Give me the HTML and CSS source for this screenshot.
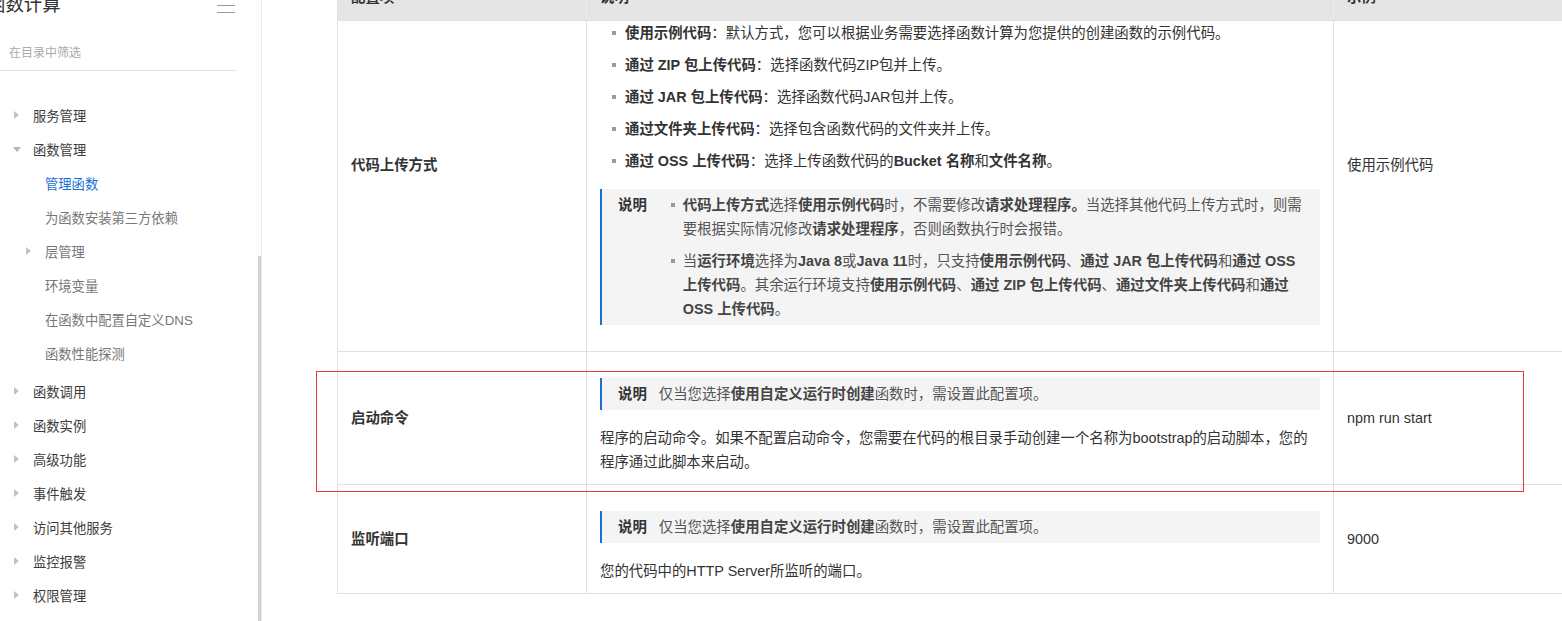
FILE: index.html
```html
<!DOCTYPE html>
<html lang="zh-CN">
<head>
  <meta charset="UTF-8">
  <meta name="viewport" content="width=device-width, initial-scale=1.0">
  <title>管理函数 - 函数计算</title>
  <link rel="stylesheet" href="styles.css">
</head>
<body>

  <aside class="sidebar">
    <div class="side-head">
      <span class="side-title">函数计算</span>
      <svg class="menu-icon" width="18" height="16" viewBox="0 0 18 16">
        <path d="M0 1.5h18M0 8.5h18M0 15.5h18" stroke="#9a9a9a" stroke-width="1"/>
      </svg>
    </div>
    <div class="filter">在目录中筛选</div>

    <ul class="nav">
      <li class="nav-item"><span class="arrow"></span>服务管理</li>
      <li class="nav-item"><span class="arrow open"></span>函数管理</li>
      <li>
        <ul class="sub-nav">
          <li class="nav-item sub active"><span class="arrow none"></span>管理函数</li>
          <li class="nav-item sub"><span class="arrow none"></span>为函数安装第三方依赖</li>
          <li class="nav-item sub"><span class="arrow"></span>层管理</li>
          <li class="nav-item sub"><span class="arrow none"></span>环境变量</li>
          <li class="nav-item sub"><span class="arrow none"></span>在函数中配置自定义DNS</li>
          <li class="nav-item sub"><span class="arrow none"></span>函数性能探测</li>
        </ul>
      </li>
      <li class="nav-item"><span class="arrow"></span>函数调用</li>
      <li class="nav-item"><span class="arrow"></span>函数实例</li>
      <li class="nav-item"><span class="arrow"></span>高级功能</li>
      <li class="nav-item"><span class="arrow"></span>事件触发</li>
      <li class="nav-item"><span class="arrow"></span>访问其他服务</li>
      <li class="nav-item"><span class="arrow"></span>监控报警</li>
      <li class="nav-item"><span class="arrow"></span>权限管理</li>
    </ul>
    <div class="scroll-thumb"></div>
  </aside>

  <main class="main">
    <div class="doc">
      <table class="config-table head-table">
        <colgroup><col class="c1"><col class="c2"><col class="c3"></colgroup>
        <tr>
          <th>配置项</th>
          <th>说明</th>
          <th>示例</th>
        </tr>
      </table>

      <table class="config-table">
        <colgroup><col class="c1"><col class="c2"><col class="c3"></colgroup>
        <tr>
          <td class="name">代码上传方式</td>
          <td>
            <p>选择函数代码的上传方式，包括：</p>
            <ul class="dots">
              <li><b>使用示例代码</b>：默认方式，您可以根据业务需要选择函数计算为您提供的创建函数的示例代码。</li>
              <li><b>通过 ZIP 包上传代码</b>：选择函数代码ZIP包并上传。</li>
              <li><b>通过 JAR 包上传代码</b>：选择函数代码JAR包并上传。</li>
              <li><b>通过文件夹上传代码</b>：选择包含函数代码的文件夹并上传。</li>
              <li><b>通过 OSS 上传代码</b>：选择上传函数代码的<b>Bucket 名称</b>和<b>文件名称</b>。</li>
            </ul>
            <div class="note">
              <span class="note-label">说明</span>
              <div class="note-body">
                <ul class="dots">
                  <li><b>代码上传方式</b>选择<b>使用示例代码</b>时，不需要修改<b>请求处理程序。</b>当选择其他代码上传方式时，则需要根据实际情况修改<b>请求处理程序</b>，否则函数执行时会报错。</li>
                  <li>当<b>运行环境</b>选择为<b>Java 8</b>或<b>Java 11</b>时，只支持<b>使用示例代码</b>、<b>通过 JAR 包上传代码</b>和<b>通过 OSS 上传代码</b>。其余运行环境支持<b>使用示例代码</b>、<b>通过 ZIP 包上传代码</b>、<b>通过文件夹上传代码</b>和<b>通过 OSS 上传代码</b>。</li>
                </ul>
              </div>
            </div>
          </td>
          <td class="example">使用示例代码</td>
        </tr>
        <tr>
          <td class="name">启动命令</td>
          <td>
            <div class="note">
              <span class="note-label">说明</span>
              <div class="note-body">仅当您选择<b>使用自定义运行时创建</b>函数时，需设置此配置项。</div>
            </div>
            <p>程序的启动命令。如果不配置启动命令，您需要在代码的根目录手动创建一个名称为bootstrap的启动脚本，您的程序通过此脚本来启动。</p>
          </td>
          <td class="example">npm run start</td>
        </tr>
        <tr>
          <td class="name">监听端口</td>
          <td>
            <div class="note">
              <span class="note-label">说明</span>
              <div class="note-body">仅当您选择<b>使用自定义运行时创建</b>函数时，需设置此配置项。</div>
            </div>
            <p>您的代码中的HTTP Server所监听的端口。</p>
          </td>
          <td class="example">9000</td>
        </tr>
      </table>
    </div>
  </main>

  <div class="highlight-box"></div>

</body>
</html>
```

FILE: styles.css
```css
body {
  margin: 0;
  display: flex;
  height: 100vh;
  overflow: hidden;
  background: #fff;
  color: #333;
  font-family: "Liberation Sans", "Noto Sans CJK SC", sans-serif;
}

ul {
  list-style: none;
  margin: 0;
  padding: 0;
}

/* sidebar */
.sidebar {
  position: relative;
  flex: 0 0 262px;
  box-sizing: border-box;
  height: 100%;
  padding-right: 26px;
  border-right: 1px solid #ececec;
}

.side-head {
  display: flex;
  justify-content: space-between;
  align-items: center;
  height: 24px;
  margin-top: -7px;
}

.side-title {
  margin-left: -13px;
  font-size: 18.4px;
  line-height: 24px;
  color: #333;
}

.filter {
  margin: 24px -2px 0 0;
  padding: 0 0 5px 9px;
  font-size: 12px;
  line-height: 24px;
  color: #aaa;
  border-bottom: 1px solid #e4e4e4;
}

.nav {
  margin-top: 27px;
}

.nav-item {
  display: flex;
  align-items: center;
  height: 34px;
  padding-left: 13px;
  font-size: 13.3px;
  color: #3c3c3c;
  white-space: nowrap;
}

.nav-item.sub {
  padding-left: 25px;
  color: #777;
}

.nav-item.active {
  color: #1a6fd8;
}

.sub-nav {
  padding-bottom: 4px;
}

.arrow {
  flex: 0 0 20px;
  height: 8px;
  position: relative;
}

.arrow::before {
  content: "";
  position: absolute;
  left: 1px;
  top: 0;
  border-left: 5px solid #c2c2c2;
  border-top: 4px solid transparent;
  border-bottom: 4px solid transparent;
}

.arrow.open::before {
  left: 0;
  top: 2px;
  border-top: 5px solid #b4b4b4;
  border-left: 4px solid transparent;
  border-right: 4px solid transparent;
  border-bottom: 0;
}

.arrow.none::before {
  display: none;
}

.scroll-thumb {
  position: absolute;
  right: 0;
  top: 256px;
  bottom: 0;
  width: 3px;
  background: #d2d2d2;
}

/* main document */
.main {
  flex: 1;
  min-width: 0;
  height: 100%;
  overflow: hidden;
  padding-left: 75px;
}

.doc {
  position: relative;
  display: flow-root;
}

.config-table {
  table-layout: fixed;
  width: 1256px;
  margin-top: -22px;
  border-collapse: collapse;
  font-size: 14.4px;
  line-height: 24px;
  color: #333;
}

.config-table col.c1 { width: 249px; }
.config-table col.c2 { width: 747px; }
.config-table col.c3 { width: 260px; }

.config-table td {
  padding: 10px 13px;
  border: 1px solid #e0e0e0;
  vertical-align: top;
  text-align: left;
}

.config-table td.name,
.config-table td.example {
  vertical-align: middle;
}

.config-table td.name {
  font-weight: bold;
}

.head-table {
  position: absolute;
  top: -15px;
  left: 0;
  z-index: 2;
  margin-top: 0;
  background: #e5e5e5;
}

.head-table th {
  padding: 0 13px 11px;
  text-align: left;
  font-weight: bold;
  border-left: 1px solid #ededed;
  border-bottom: 1px solid #e0e0e0;
}

.head-table th:first-child {
  border-left: 1px solid #e0e0e0;
}

.config-table p {
  margin: 0;
}

.dots {
  margin-top: 8px;
}

.dots li {
  position: relative;
  padding-left: 25px;
}

.dots li + li {
  margin-top: 8px;
}

.dots li::before {
  content: "";
  position: absolute;
  left: 12px;
  top: 10px;
  width: 4px;
  height: 4px;
  background: #9a9a9a;
}

.note {
  display: flex;
  margin: 16px 0;
  padding: 4px 16px;
  background: #f4f4f4;
  border-left: 2px solid #1f6ddb;
  color: #555;
}

.note-label {
  flex: 0 0 auto;
  margin-right: 12px;
  font-weight: bold;
  color: #333;
}

.note-body {
  flex: 1;
}

.note-body .dots {
  margin-top: 0;
}

.note-body .dots li {
  padding-left: 24px;
}

.note b {
  color: #444;
}

.highlight-box {
  position: absolute;
  left: 316px;
  top: 371px;
  width: 1208px;
  height: 121px;
  box-sizing: border-box;
  border: 1px solid #e53935;
  pointer-events: none;
}
```
